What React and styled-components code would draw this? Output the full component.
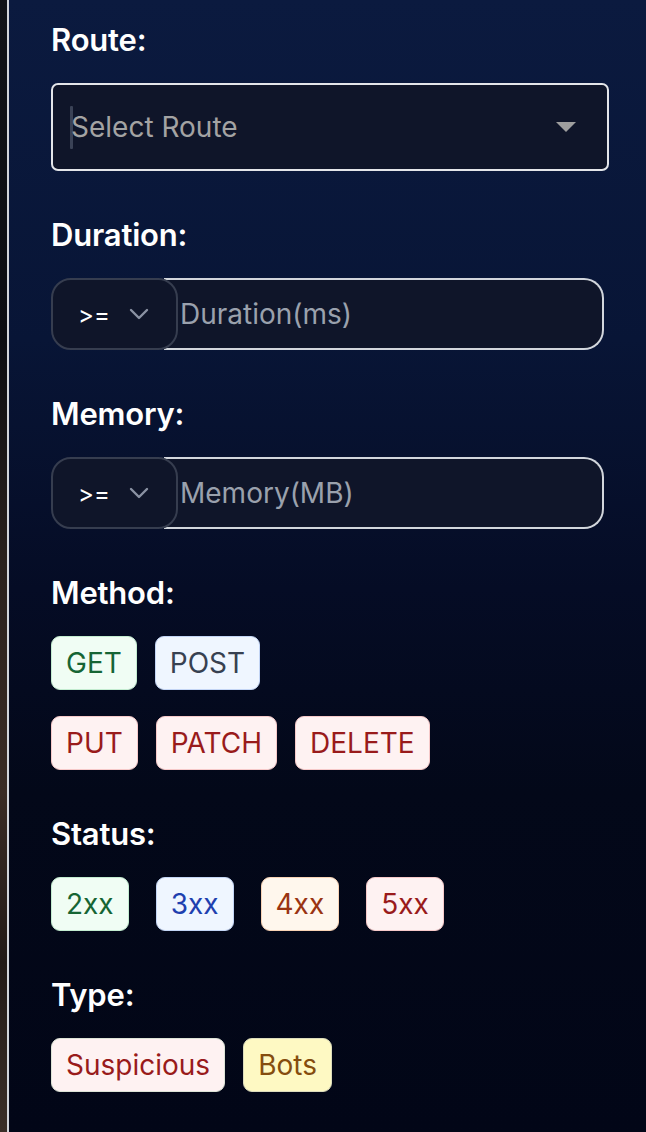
import React from "react";
import styled, { createGlobalStyle } from "styled-components";

const Global = createGlobalStyle`
  html, body { margin: 0; padding: 0; background: #05070d; }
  body { font-family: Inter, "Noto Sans", sans-serif; }
  * { box-sizing: border-box; }
`;

const Page = styled.div`
  display: flex;
  width: 646px;
  min-height: 1132px;
`;

const Backdrop = styled.div`
  width: 7px;
  flex: none;
  background: linear-gradient(180deg, #111318 0%, #0c0d12 30%, #2a211d 50%, #3a2c25 70%, #221a17 85%, #3b2f28 100%);
`;

const Panel = styled.div`
  flex: 1;
  border-left: 2px solid #d2d5da;
  background: linear-gradient(180deg, #0b1a3f 0%, #081536 30%, #050c25 52%, #030819 70%, #020617 100%);
  padding: 20px 37px 40px 42px;
  display: flex;
  flex-direction: column;
  gap: 44px;
`;

const Section = styled.div`
  display: flex;
  flex-direction: column;
  gap: 24px;
`;

const Label = styled.div`
  color: #ffffff;
  font-size: 31px;
  font-weight: 600;
  line-height: 40px;
  height: 39px;
  letter-spacing: -0.2px;
`;

const SelectBox = styled.div`
  height: 88px;
  border: 2px solid #e3e5e9;
  border-radius: 7px;
  background: #0f1529;
  display: flex;
  align-items: center;
  padding: 0 31px 0 17px;
`;

const Caret = styled.span`
  width: 3px;
  height: 43px;
  background: #3a4256;
  border-radius: 1px;
  margin-right: -2px;
  flex: none;
`;

const Placeholder = styled.span`
  flex: 1;
  color: ${(p) => p.$color || "#a3a3a3"};
  font-size: 28px;
  line-height: 1;
`;

const Group = styled.div`
  display: flex;
  height: 72px;
  margin-right: 5px;
`;

const OpSelect = styled.div`
  position: relative;
  z-index: 1;
  width: 127px;
  flex: none;
  border: 2px solid #363d4f;
  border-radius: 20px;
  background: #0f1529;
  display: flex;
  align-items: center;
  padding-left: 25px;
  gap: 19px;
  color: #ffffff;
  font-size: 24px;
`;

const InputField = styled.div`
  flex: 1;
  margin-left: -14px;
  border: 2px solid #d2d6dc;
  border-left: none;
  border-radius: 0 20px 20px 0;
  background: #0f1529;
  display: flex;
  align-items: center;
  padding-left: 16px;
`;

const ChipRows = styled.div`
  display: flex;
  flex-direction: column;
  gap: 26px;
`;

const ChipRow = styled.div`
  display: flex;
  gap: ${(p) => p.$gap || 18}px;
`;

const Chip = styled.div`
  height: 54px;
  padding: 0 14px;
  border: 1.5px solid ${(p) => p.$border};
  background: ${(p) => p.$bg};
  color: ${(p) => p.$color};
  border-radius: 9px;
  display: flex;
  align-items: center;
  font-size: 28px;
  line-height: 1;
`;

const tones = {
  green: { $bg: "#f0fdf4", $border: "#c3ecd0", $color: "#166534" },
  slate: { $bg: "#eff6ff", $border: "#c3d5f5", $color: "#374151" },
  red: { $bg: "#fef2f2", $border: "#f6c9c9", $color: "#991b1b" },
  blue: { $bg: "#eff6ff", $border: "#c3d5f5", $color: "#1e40af" },
  orange: { $bg: "#fff7ed", $border: "#f8d3b5", $color: "#9a3412" },
  sus: { $bg: "#fef2f2", $border: "#dde3d6", $color: "#991b1b" },
  bots: { $bg: "#fef9c3", $border: "#dcdcbc", $color: "#854d0e" },
};

const Triangle = () => (
  <svg width="20" height="10" viewBox="0 0 20 10">
    <path d="M0 0 H20 L10 10 Z" fill="#9e9e9e" />
  </svg>
);

const Chevron = () => (
  <svg width="20" height="12" viewBox="0 0 20 12">
    <path d="M2 2 L10 10 L18 2" fill="none" stroke="#8a92a3" strokeWidth="2.4" strokeLinecap="round" strokeLinejoin="round" />
  </svg>
);

const Range = ({ placeholder }) => (
  <Group>
    <OpSelect>
      <span>&gt;=</span>
      <Chevron />
    </OpSelect>
    <InputField>
      <Placeholder $color="#9aa1ad">{placeholder}</Placeholder>
    </InputField>
  </Group>
);

export default function App() {
  return (
    <Page>
      <Global />
      <Backdrop />
      <Panel>
        <Section>
          <Label>Route:</Label>
          <SelectBox>
            <Caret />
            <Placeholder>Select Route</Placeholder>
            <Triangle />
          </SelectBox>
        </Section>
        <Section>
          <Label>Duration:</Label>
          <Range placeholder="Duration(ms)" />
        </Section>
        <Section>
          <Label>Memory:</Label>
          <Range placeholder="Memory(MB)" />
        </Section>
        <Section>
          <Label>Method:</Label>
          <ChipRows>
            <ChipRow>
              <Chip {...tones.green}>GET</Chip>
              <Chip {...tones.slate}>POST</Chip>
            </ChipRow>
            <ChipRow>
              <Chip {...tones.red}>PUT</Chip>
              <Chip {...tones.red}>PATCH</Chip>
              <Chip {...tones.red}>DELETE</Chip>
            </ChipRow>
          </ChipRows>
        </Section>
        <Section>
          <Label>Status:</Label>
          <ChipRow $gap={27}>
            <Chip {...tones.green}>2xx</Chip>
            <Chip {...tones.blue}>3xx</Chip>
            <Chip {...tones.orange}>4xx</Chip>
            <Chip {...tones.red}>5xx</Chip>
          </ChipRow>
        </Section>
        <Section>
          <Label>Type:</Label>
          <ChipRow>
            <Chip {...tones.sus}>Suspicious</Chip>
            <Chip {...tones.bots}>Bots</Chip>
          </ChipRow>
        </Section>
      </Panel>
    </Page>
  );
}
